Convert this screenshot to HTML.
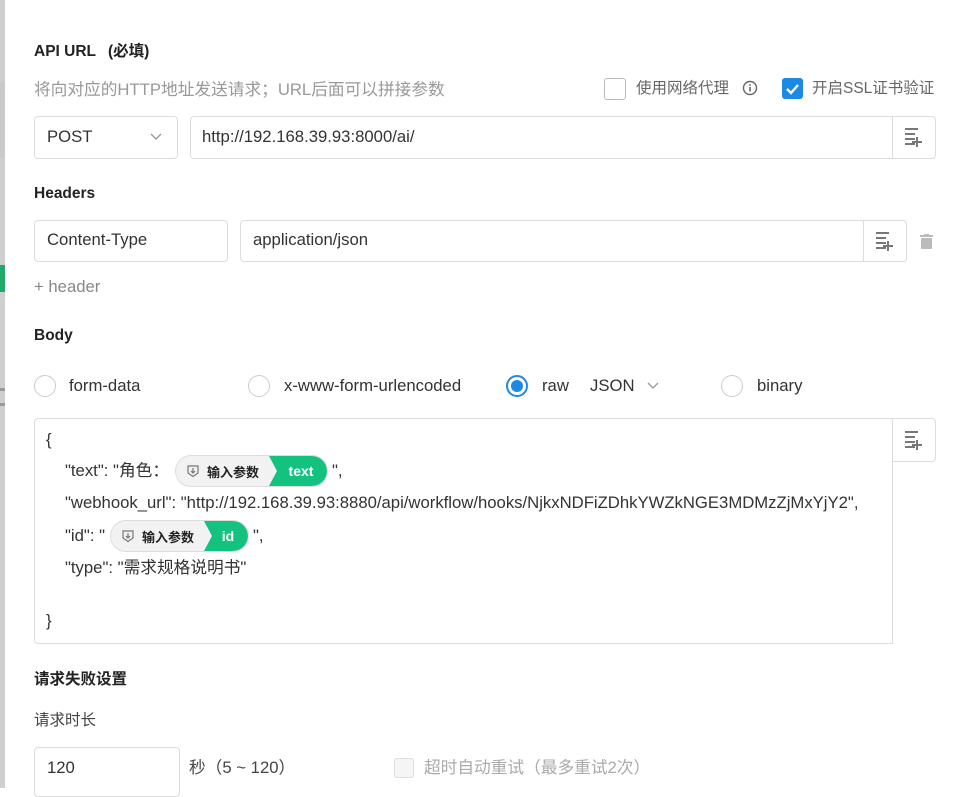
<!DOCTYPE html>
<html><head><meta charset="utf-8">
<style>
*{margin:0;padding:0;box-sizing:border-box}
body{width:953px;height:788px;overflow:hidden;background:#fff;font-family:"Liberation Sans","Noto Sans CJK SC",sans-serif;color:#333;position:relative;font-size:16.7px}
.a{position:absolute;white-space:nowrap;line-height:20px}
.box{position:absolute;border:1px solid #dcdcdc;border-radius:4px;background:#fff}
.t{font-weight:bold;font-size:15.5px;color:#222}
.ico{position:absolute;width:43px;display:flex;align-items:center;justify-content:center;border-left:1px solid #dcdcdc}
.radio{position:absolute;width:22px;height:22px;border:1px solid #ccc;border-radius:50%;background:#fff}
.pill{position:absolute;height:32px;border-radius:16px;background:#f2f2f2;border:1px solid #ddd;overflow:hidden;display:flex;align-items:center;font-size:13px;font-weight:bold;color:#222}
.pill .g{position:absolute;top:0;bottom:0;right:0;background:#13c27f;color:#fff;font-size:14px;display:flex;align-items:center;justify-content:center;clip-path:polygon(0 0,100% 0,100% 100%,0 100%,8px 50%);border-radius:0 16px 16px 0}
</style></head><body>
<svg width="0" height="0" style="position:absolute"><defs><g id="li"><rect x="0" y="0" width="13" height="2" fill="#777"/><rect x="0" y="5" width="10" height="2" fill="#777"/><rect x="0" y="10" width="10" height="2" fill="#777"/><rect x="0" y="15" width="10" height="2" fill="#777"/><rect x="11" y="9" width="2" height="10" fill="#777"/><rect x="7" y="13" width="10" height="2" fill="#777"/></g></defs></svg>
<div class="a" style="left:0;top:0;width:5px;height:788px;background:#cfcfcf"></div>
<div class="a" style="left:0;top:82px;width:5px;height:75px;background:#c9c9c9"></div>
<div class="a" style="left:0;top:265px;width:5px;height:27px;background:#22a86a"></div>
<div class="a" style="left:0;top:388px;width:5px;height:3px;background:#999"></div>
<div class="a" style="left:0;top:403px;width:5px;height:3px;background:#999"></div>

<div class="a t" style="left:34px;top:42px">API URL</div>
<div class="a t" style="left:108px;top:42px">(必填)</div>
<div class="a" style="left:34px;top:80px;color:#999">将向对应的HTTP地址发送请求；URL后面可以拼接参数</div>
<div class="a" style="left:604px;top:78px;width:22px;height:22px;border:1px solid #bbb;border-radius:3px"></div>
<div class="a" style="left:636px;top:79px;color:#666;font-size:15.5px">使用网络代理</div>
<svg class="a" style="left:742px;top:80px" width="16" height="16" viewBox="0 0 16 16"><circle cx="8" cy="8" r="6.5" fill="none" stroke="#666" stroke-width="1.4"/><rect x="7.2" y="7" width="1.6" height="4.5" fill="#666"/><rect x="7.2" y="4.2" width="1.6" height="1.6" fill="#666"/></svg>
<div class="a" style="left:782px;top:78px;width:21px;height:21px;background:#1e88e5;border-radius:3px"><svg width="21" height="21" viewBox="0 0 21 21"><path d="M5 11l4 4 7-8" fill="none" stroke="#fff" stroke-width="2.4"/></svg></div>
<div class="a" style="left:812px;top:79px;color:#666;font-size:15.5px">开启SSL证书验证</div>

<div class="box" style="left:34px;top:116px;width:144px;height:43px"></div>
<div class="a" style="left:47px;top:127px">POST</div>
<svg class="a" style="left:150px;top:133px" width="12" height="8"><path d="M1 1l5 5 5-5" fill="none" stroke="#999" stroke-width="1.3"/></svg>
<div class="box" style="left:190px;top:116px;width:746px;height:43px"></div>
<div class="a" style="left:202px;top:127px">http://192.168.39.93:8000/ai/</div>
<div class="ico" style="left:892px;top:117px;height:41px"><svg width="18" height="19"><use href="#li"/></svg></div>

<div class="a t" style="left:34px;top:184px">Headers</div>
<div class="box" style="left:34px;top:220px;width:194px;height:42px"></div>
<div class="a" style="left:47px;top:230px">Content-Type</div>
<div class="box" style="left:240px;top:220px;width:667px;height:42px"></div>
<div class="a" style="left:253px;top:230px">application/json</div>
<div class="ico" style="left:863px;top:221px;height:40px"><svg width="18" height="19"><use href="#li"/></svg></div>
<svg class="a" style="left:920px;top:234px" width="13" height="15"><rect x="0" y="1" width="13" height="2" fill="#bbb"/><rect x="4" y="0" width="5" height="2" fill="#bbb"/><rect x="1" y="4" width="11" height="11" rx="1" fill="#bbb"/></svg>
<div class="a" style="left:34px;top:277px;color:#888">+ header</div>

<div class="a t" style="left:34px;top:326px">Body</div>
<div class="radio" style="left:34px;top:375px"></div>
<div class="a" style="left:69px;top:376px">form-data</div>
<div class="radio" style="left:248px;top:375px"></div>
<div class="a" style="left:284px;top:376px">x-www-form-urlencoded</div>
<div class="radio" style="left:506px;top:375px;border:2px solid #1e88e5"><div style="position:absolute;left:3px;top:3px;width:12px;height:12px;border-radius:50%;background:#1e88e5"></div></div>
<div class="a" style="left:542px;top:376px">raw</div>
<div class="a" style="left:590px;top:376px">JSON</div>
<svg class="a" style="left:647px;top:382px" width="12" height="8"><path d="M1 1l5 5 5-5" fill="none" stroke="#999" stroke-width="1.3"/></svg>
<div class="radio" style="left:721px;top:375px"></div>
<div class="a" style="left:757px;top:376px">binary</div>

<div class="a" style="left:34px;top:418px;width:859px;height:226px;border:1px solid #dcdcdc;border-radius:4px 0 0 4px"></div>
<div class="a" style="left:892px;top:418px;width:44px;height:44px;border:1px solid #dcdcdc;border-left:none;border-radius:0 4px 4px 0;display:flex;align-items:center;justify-content:center"><svg width="18" height="19"><use href="#li"/></svg></div>
<div class="a" style="left:46px;top:430px">{</div>
<div class="a" style="left:65px;top:461px">"text": "角色：</div>
<div class="pill" style="left:175px;top:455px;width:153px"><svg style="margin-left:10px" width="14" height="14" viewBox="0 0 14 14"><path d="M2 2h10v7l-5 3.5L2 9z" fill="none" stroke="#777" stroke-width="1.2"/><path d="M7 4v5M5 7l2 2 2-2" fill="none" stroke="#777" stroke-width="1.2"/></svg><span style="margin-left:7px">输入参数</span><div class="g" style="width:58px;padding-left:6px">text</div></div>
<div class="a" style="left:332px;top:461px">",</div>
<div class="a" style="left:65px;top:493px">"webhook_url": "http://192.168.39.93:8880/api/workflow/hooks/NjkxNDFiZDhkYWZkNGE3MDMzZjMxYjY2",</div>
<div class="a" style="left:65px;top:526px">"id": "</div>
<div class="pill" style="left:110px;top:520px;width:139px"><svg style="margin-left:10px" width="14" height="14" viewBox="0 0 14 14"><path d="M2 2h10v7l-5 3.5L2 9z" fill="none" stroke="#777" stroke-width="1.2"/><path d="M7 4v5M5 7l2 2 2-2" fill="none" stroke="#777" stroke-width="1.2"/></svg><span style="margin-left:7px">输入参数</span><div class="g" style="width:44px;padding-left:4px">id</div></div>
<div class="a" style="left:253px;top:526px">",</div>
<div class="a" style="left:65px;top:558px">"type": "需求规格说明书"</div>
<div class="a" style="left:46px;top:611px">}</div>

<div class="a t" style="left:34px;top:670px">请求失败设置</div>
<div class="a" style="left:34px;top:711px;font-size:15.5px;color:#444">请求时长</div>
<div class="box" style="left:34px;top:747px;width:146px;height:50px"></div>
<div class="a" style="left:47px;top:758px">120</div>
<div class="a" style="left:189px;top:758px;color:#444">秒（5 ~ 120）</div>
<div class="a" style="left:394px;top:758px;width:20px;height:20px;border:1px solid #ddd;border-radius:3px;background:#f5f5f5"></div>
<div class="a" style="left:424px;top:758px;color:#aaa">超时自动重试（最多重试2次）</div>
</body></html>
